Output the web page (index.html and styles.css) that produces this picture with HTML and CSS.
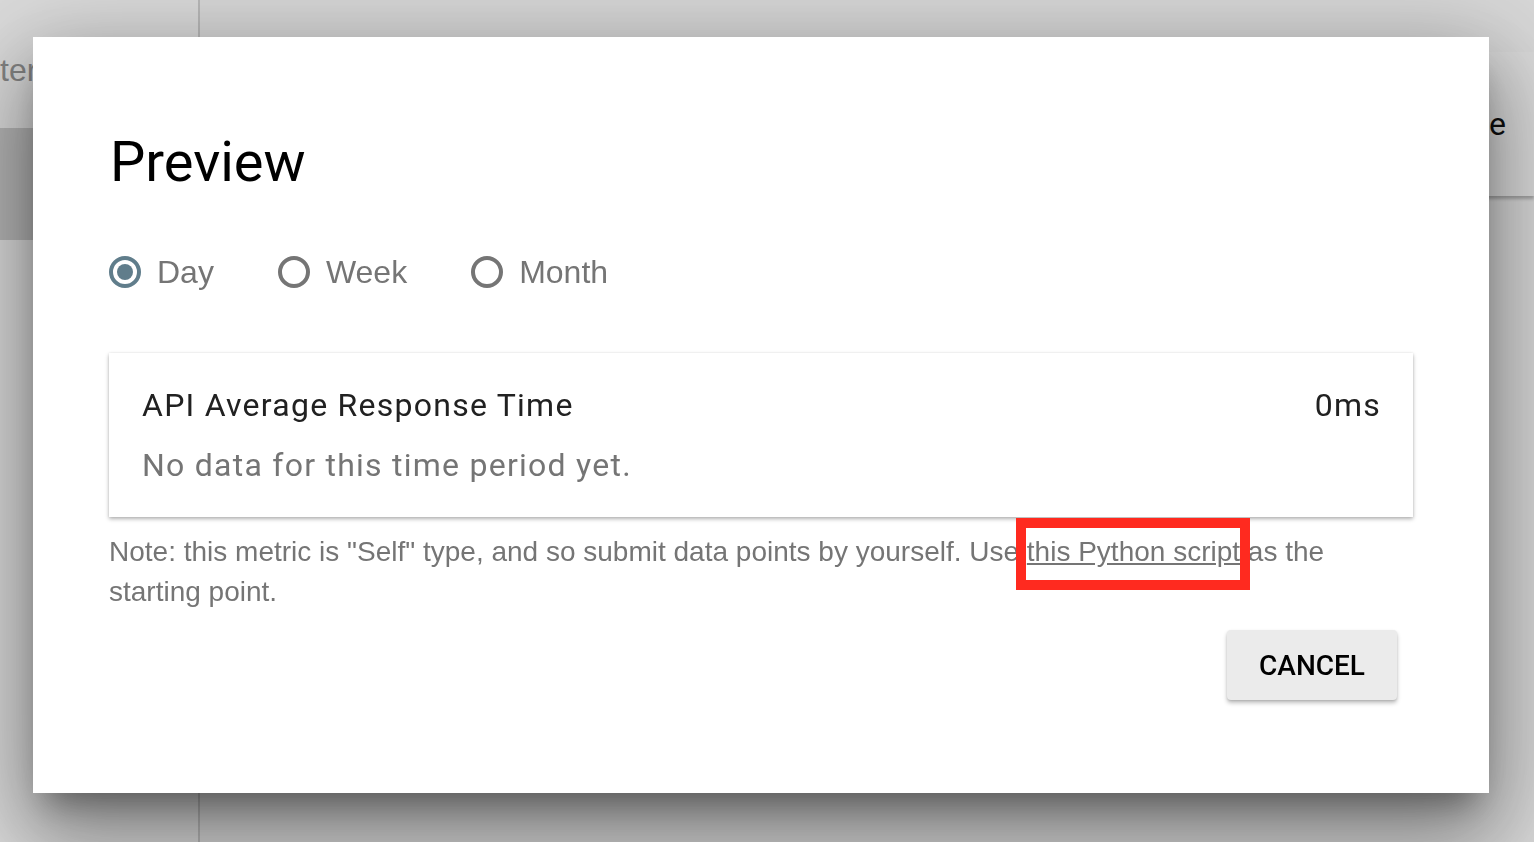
FILE: index.html
```html
<!DOCTYPE html>
<html lang="en">
<head>
<meta charset="utf-8">
<title>Preview</title>
<link rel="stylesheet" href="styles.css">
</head>
<body>
<div class="app">
  <aside class="sidebar">
    <div class="nav-item nav-label">ter</div>
    <div class="nav-item nav-active"></div>
  </aside>
  <main class="main">
    <div class="bg-card">Create</div>
  </main>
</div>
<div class="overlay"></div>
<div class="dialog">
  <h1 class="dialog-title">Preview</h1>
  <div class="radio-group">
    <label class="radio checked"><span class="radio-circle"></span><span class="radio-label">Day</span></label>
    <label class="radio"><span class="radio-circle"></span><span class="radio-label">Week</span></label>
    <label class="radio"><span class="radio-circle"></span><span class="radio-label">Month</span></label>
  </div>
  <div class="metric-card">
    <div class="metric-row">
      <span class="metric-name">API Average Response Time</span>
      <span class="metric-value">0ms</span>
    </div>
    <div class="metric-empty">No data for this time period yet.</div>
  </div>
  <p class="note">Note: this metric is "Self" type, and so submit data points by yourself. Use <a class="note-link" href="#">this Python script</a> as the starting point.</p>
  <div class="actions">
    <button class="btn">CANCEL</button>
  </div>
  <div class="highlight"></div>
</div>
</body>
</html>
```

FILE: styles.css
```css
html, body {
  margin: 0;
  padding: 0;
  width: 1534px;
  height: 842px;
  overflow: hidden;
}

body {
  font-family: Roboto, "Liberation Sans", sans-serif;
  background: #ffffff;
}

.app {
  display: flex;
  height: 842px;
}

.sidebar {
  width: 198px;
  border-right: 2px solid #d8d8d8;
  background: #ffffff;
  display: flex;
  flex-direction: column;
  padding-top: 52px;
}

.nav-label {
  font-family: "Liberation Sans", sans-serif;
  font-size: 32px;
  color: #9a9a9a;
  height: 76px;
  line-height: 36px;
}

.nav-active {
  height: 112px;
  background: #d4d4d4;
}

.main {
  flex: 1;
  background: #fcfcfc;
  display: flex;
  justify-content: flex-end;
  align-items: flex-start;
  padding-top: 52px;
}

.bg-card {
  width: 220px;
  height: 144px;
  background: #ffffff;
  box-shadow: 0 3px 3px rgba(0, 0, 0, 0.25);
  font-size: 32px;
  color: #111;
  text-align: right;
  padding-right: 28px;
  box-sizing: border-box;
  line-height: 144px;
}

.overlay {
  position: fixed;
  inset: 0;
  background: rgba(0, 0, 0, 0.14);
}

.dialog {
  position: absolute;
  left: 33px;
  top: 37px;
  width: 1456px;
  height: 756px;
  box-sizing: border-box;
  background: #ffffff;
  padding: 92px 76px 0 76px;
  box-shadow: 0 48px 76px 6px rgba(0, 0, 0, 0.26),
              0 18px 92px 16px rgba(0, 0, 0, 0.22),
              0 22px 30px -14px rgba(0, 0, 0, 0.36);
}

.dialog-title {
  margin: 0;
  font-family: Roboto, sans-serif;
  font-weight: 400;
  font-size: 56px;
  line-height: 66px;
  color: #000;
  padding-left: 1px;
}

.radio-group {
  display: flex;
  gap: 64px;
  margin-top: 53px;
  height: 48px;
  align-items: center;
}

.radio {
  display: flex;
  align-items: center;
  gap: 16px;
}

.radio-circle {
  width: 32px;
  height: 32px;
  box-sizing: border-box;
  border: 4px solid #757575;
  border-radius: 50%;
  display: flex;
  align-items: center;
  justify-content: center;
}

.radio.checked .radio-circle {
  border-color: #607d8b;
}

.radio.checked .radio-circle::after {
  content: "";
  width: 16px;
  height: 16px;
  border-radius: 50%;
  background: #607d8b;
}

.radio-label {
  font-family: "Liberation Sans", sans-serif;
  font-size: 32px;
  color: #757575;
}

.metric-card {
  margin-top: 57px;
  width: 1304px;
  box-sizing: border-box;
  padding: 32px 32px 32px 33px;
  background: #fff;
  box-shadow: 0 2px 4px rgba(0, 0, 0, 0.3), 0 0 2px rgba(0, 0, 0, 0.08);
}

.metric-row {
  display: flex;
  justify-content: space-between;
  font-size: 32px;
  line-height: 40px;
  letter-spacing: 1.25px;
  color: #212121;
}

.metric-empty {
  margin-top: 20px;
  font-size: 32px;
  line-height: 40px;
  letter-spacing: 1.25px;
  color: #757575;
}

.note {
  margin: 15px 0 0 0;
  width: 1304px;
  font-family: "Liberation Sans", sans-serif;
  font-size: 28px;
  line-height: 40px;
  color: #757575;
}

.note-link {
  color: #757575;
  text-decoration: underline;
}

.actions {
  display: flex;
  justify-content: flex-end;
  width: 1288px;
  margin-top: 18px;
}

.btn {
  width: 170px;
  height: 70px;
  border: none;
  border-radius: 4px;
  background: #ebebeb;
  font-family: Roboto, sans-serif;
  font-weight: 500;
  font-size: 28px;
  color: #000;
  box-shadow: 0 3px 4px rgba(0, 0, 0, 0.25), 0 1px 2px rgba(0, 0, 0, 0.1);
  padding: 0;
}

.highlight {
  position: absolute;
  left: 983px;
  top: 481px;
  width: 234px;
  height: 72px;
  box-sizing: border-box;
  border: 10px solid #ff2a1f;
}
```
